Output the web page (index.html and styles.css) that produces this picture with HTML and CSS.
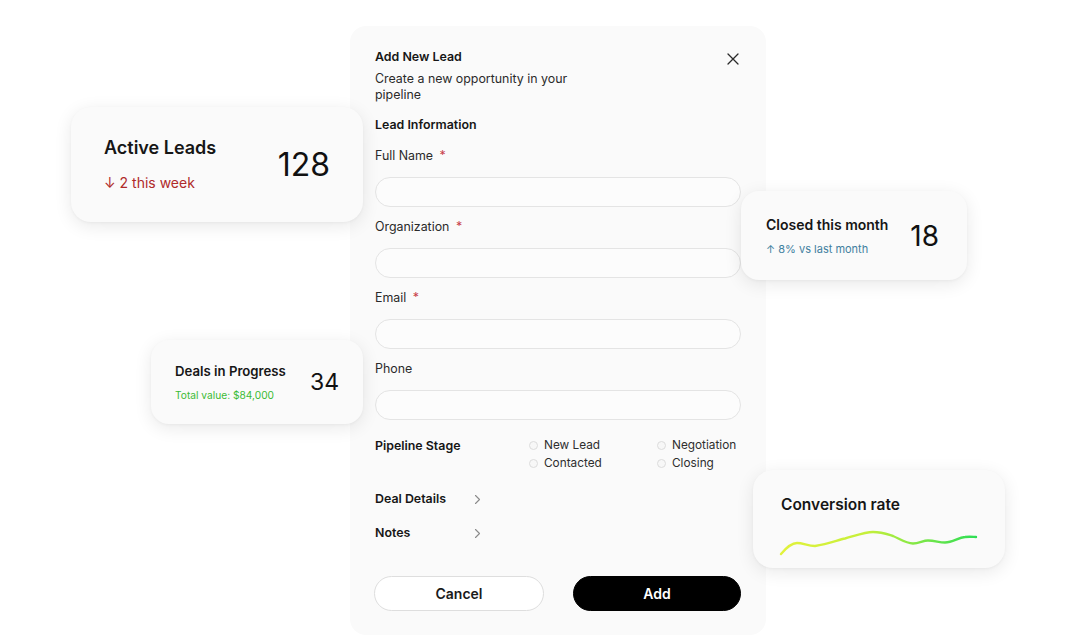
FILE: index.html
```html
<!DOCTYPE html>
<html lang="en">
<head>
<meta charset="utf-8">
<title>Add New Lead</title>
<link rel="stylesheet" href="styles.css">
</head>
<body>
<div class="stage">
  <section class="modal">
    <header class="modal-head">
      <div class="head-text">
        <h1 class="modal-title">Add New Lead</h1>
        <p class="modal-sub">Create a new opportunity in your pipeline</p>
      </div>
      <button class="close" aria-label="Close">
        <svg width="12" height="12" viewBox="0 0 12 12"><path d="M1 1L11 11M11 1L1 11" stroke="#2a2a2a" stroke-width="1.3" stroke-linecap="round"/></svg>
      </button>
    </header>

    <h2 class="section-title">Lead Information</h2>

    <div class="fields">
      <label class="field">
        <span class="label">Full Name <span class="req">*</span></span>
        <span class="input"></span>
      </label>
      <label class="field">
        <span class="label">Organization <span class="req">*</span></span>
        <span class="input"></span>
      </label>
      <label class="field">
        <span class="label">Email <span class="req">*</span></span>
        <span class="input"></span>
      </label>
      <label class="field">
        <span class="label">Phone</span>
        <span class="input"></span>
      </label>
    </div>

    <div class="stage-row">
      <span class="section-title inline">Pipeline Stage</span>
      <div class="radios">
        <span class="radio"><i></i>New Lead</span>
        <span class="radio"><i></i>Negotiation</span>
        <span class="radio"><i></i>Contacted</span>
        <span class="radio"><i></i>Closing</span>
      </div>
    </div>

    <div class="collapse">
      <span class="collapse-label">Deal Details</span>
      <svg class="chev" width="7" height="11" viewBox="0 0 7 11"><path d="M1.5 1.5L5.5 5.5L1.5 9.5" fill="none" stroke="#8a8a8a" stroke-width="1.1" stroke-linecap="round" stroke-linejoin="round"/></svg>
    </div>
    <div class="collapse">
      <span class="collapse-label">Notes</span>
      <svg class="chev" width="7" height="11" viewBox="0 0 7 11"><path d="M1.5 1.5L5.5 5.5L1.5 9.5" fill="none" stroke="#8a8a8a" stroke-width="1.1" stroke-linecap="round" stroke-linejoin="round"/></svg>
    </div>

    <div class="actions">
      <button class="btn btn-cancel">Cancel</button>
      <button class="btn btn-add">Add</button>
    </div>
  </section>

  <div class="card card-leads">
    <div class="card-text">
      <div class="card-title big">Active Leads</div>
      <div class="delta down">↓ 2 this week</div>
    </div>
    <div class="num num-lg">128</div>
  </div>

  <div class="card card-deals">
    <div class="card-text">
      <div class="card-title small">Deals in Progress</div>
      <div class="note green small-note">Total value: $84,000</div>
    </div>
    <div class="num num-sm">34</div>
  </div>

  <div class="card card-closed">
    <div class="card-text">
      <div class="card-title">Closed this month</div>
      <div class="note blue">↑ 8% vs last month</div>
    </div>
    <div class="num num-md">18</div>
  </div>

  <div class="card card-conv">
    <div class="card-title mid">Conversion rate</div>
    <svg class="spark" width="200" height="28" viewBox="0 0 200 28">
      <defs>
        <linearGradient id="sg" x1="0" y1="0" x2="1" y2="0">
          <stop offset="0" stop-color="#e2f23c"/>
          <stop offset="0.45" stop-color="#c4ef3a"/>
          <stop offset="1" stop-color="#2ede55"/>
        </linearGradient>
      </defs>
      <path d="M3 25 C 8 19, 13 14, 19 14 C 25 14, 30 17, 37 17 C 50 15, 60 11, 67 9.5 C 78 6.5, 87 3, 95 3 C 104 3, 110 5.5, 115 7 C 122 10, 128 14.5, 135 14.5 C 141 14.5, 145 11.5, 150 11.5 C 157 11.5, 161 13.5, 167 13.5 C 175 13.5, 180 8.5, 187 8 C 192 7.5, 196 8, 198 8" fill="none" stroke="url(#sg)" stroke-width="2.4" stroke-linecap="round"/>
    </svg>
  </div>
</div>
</body>
</html>
```

FILE: styles.css
```css
* { box-sizing: border-box; }

html, body {
  margin: 0;
  padding: 0;
  background: #ffffff;
}

body {
  font-family: Inter, "Noto Sans", "Liberation Sans", sans-serif;
  color: #1a1a1a;
  -webkit-font-smoothing: antialiased;
}

.stage {
  position: relative;
  width: 1080px;
  height: 636px;
  overflow: hidden;
}

/* ---------- Modal ---------- */
.modal {
  margin: 26px 0 0 350px;
  width: 416px;
  height: 609px;
  background: #fafafa;
  border-radius: 16px;
  padding: 22px 25px 24px 25px;
  display: flex;
  flex-direction: column;
}

.modal-head {
  display: flex;
  justify-content: space-between;
  align-items: flex-start;
}

.head-text { width: 205px; }

.modal-title {
  margin: 0;
  font-size: 12.4px;
  line-height: 18px;
  font-weight: 600;
  color: #161616;
}

.modal-sub {
  margin: 5px 0 0;
  font-size: 12.4px;
  line-height: 16px;
  font-weight: 400;
  color: #2a2a2a;
}

.close {
  border: 0;
  background: none;
  padding: 0;
  margin: 5px 2px 0 0;
  width: 12px;
  height: 12px;
  display: flex;
}

.section-title {
  margin: 13px 0 0;
  font-size: 12.4px;
  line-height: 18px;
  font-weight: 600;
  color: #161616;
}

.section-title.inline { margin: 0; width: 154px; }

.fields {
  margin-top: 13px;
  display: flex;
  flex-direction: column;
  gap: 11px;
}

.field {
  display: flex;
  flex-direction: column;
  gap: 12px;
}

.label {
  font-size: 12.4px;
  line-height: 18px;
  color: #2a2a2a;
}

.req {
  color: #c8404a;
  margin-left: 3px;
}

.input {
  display: block;
  height: 30px;
  border: 1px solid #e4e4e4;
  border-radius: 999px;
  background: #fcfcfc;
}

.stage-row {
  margin-top: 16px;
  display: flex;
  align-items: flex-start;
}

.stage-row .section-title.inline { padding-top: 1px; }

.radios {
  display: grid;
  grid-template-columns: 128px 1fr;
  row-gap: 0;
}

.radio {
  display: flex;
  align-items: center;
  gap: 6px;
  font-size: 11.8px;
  line-height: 18px;
  color: #2e2e2e;
}

.radio i {
  width: 9px;
  height: 9px;
  border: 1px solid #dcdcdc;
  border-radius: 50%;
  background: #f7f7f7;
}

.collapse {
  display: flex;
  align-items: center;
  height: 34px;
}

.stage-row + .collapse { margin-top: 10px; }

.collapse-label {
  width: 99px;
  font-size: 12.4px;
  line-height: 18px;
  font-weight: 600;
  color: #161616;
}

.actions {
  margin-top: auto;
  display: grid;
  grid-template-columns: 170px 168px;
  justify-content: space-between;
  margin-left: -1px;
}

.btn {
  height: 35px;
  border-radius: 999px;
  font-family: inherit;
  font-size: 14px;
  font-weight: 600;
}

.btn-cancel {
  background: #ffffff;
  border: 1px solid #dedede;
  color: #1a1a1a;
}

.btn-add {
  background: #000000;
  border: 1px solid #000000;
  color: #ffffff;
}

/* ---------- Floating cards ---------- */
.card {
  position: absolute;
  background: #fafafa;
  border-radius: 20px;
  box-shadow: 0 4px 18px rgba(0, 0, 0, 0.09), 0 1px 3px rgba(0, 0, 0, 0.04);
  display: flex;
  align-items: center;
  justify-content: space-between;
}

.card-title {
  font-size: 14px;
  line-height: 18px;
  font-weight: 600;
  color: #161616;
}

.card-title.big { font-size: 18px; line-height: 22px; }
.card-title.mid { font-size: 15.5px; line-height: 20px; }
.card-title.small { font-size: 13.2px; }

.num {
  font-weight: 400;
  color: #111;
  letter-spacing: 0;
}

.num-lg { font-size: 32px; }
.num-md { font-size: 28px; }
.num-sm { font-size: 23px; }

.delta {
  margin-top: 14px;
  font-size: 14px;
  line-height: 20px;
}

.down { color: #b02a2a; }

.note {
  margin-top: 8px;
  font-size: 11px;
  line-height: 14px;
}

.note.small-note { font-size: 10.2px; }

.green { color: #3aba34; }
.blue { color: #3f7f9f; }

.card-leads {
  left: 71px;
  top: 107px;
  width: 292px;
  height: 115px;
  padding: 0 33px;
}

.card-deals {
  left: 151px;
  top: 340px;
  width: 212px;
  height: 84px;
  padding: 0 24px;
  border-radius: 18px;
}

.card-closed {
  left: 741px;
  top: 191px;
  width: 226px;
  height: 89px;
  padding: 0 28px 0 25px;
  border-radius: 18px;
}

.card-conv {
  left: 753px;
  top: 470px;
  width: 252px;
  height: 98px;
  padding: 25px 0 0 28px;
  flex-direction: column;
  align-items: flex-start;
  justify-content: flex-start;
}

.spark {
  margin-top: 14px;
  margin-left: -3px;
}
```
